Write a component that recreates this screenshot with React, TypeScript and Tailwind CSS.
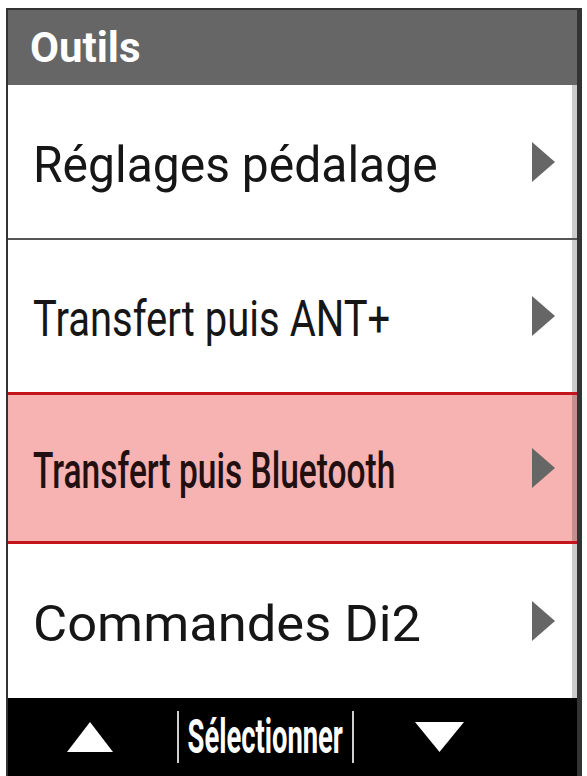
import React from "react";

const Chevron = () => (
  <svg width="23" height="40" viewBox="0 0 23 40" className="shrink-0">
    <polygon points="0,0 23,20 0,40" fill="#666666" />
  </svg>
);

type Row = { label: string; h: string; cls: string; text: string };

export default function App() {
  const rows: Row[] = [
    { label: "Réglages pédalage", h: "h-[155px] border-b-2 border-[#555555]", cls: "bg-white", text: "font-normal scale-x-[0.96]" },
    { label: "Transfert puis ANT+", h: "h-[152px]", cls: "bg-white", text: "font-normal scale-x-[0.8]" },
    { label: "Transfert puis Bluetooth", h: "h-[152px] border-y-[3px] border-[#c3151b]", cls: "bg-[#f7b2b2]", text: "font-medium scale-x-[0.67] text-[#221010]" },
    { label: "Commandes Di2", h: "h-[154px]", cls: "bg-white", text: "font-normal scale-x-[1.05]" },
  ];
  return (
    <div
      className="w-[587px] h-[776px] bg-white pl-[6px] pt-[8px] pr-[5px] overflow-hidden"
      style={{ fontFamily: "Roboto, 'Noto Sans', sans-serif" }}
    >
      <div className="flex h-full flex-col border-l-2 border-t-2 border-r-[5px] border-[#333333]">
        <div className="flex h-[75px] shrink-0 items-center bg-[#666666] pl-[22px]">
          <span className="text-[42px] font-bold leading-none text-white">Outils</span>
        </div>
        {rows.map((r) => (
          <div key={r.label} className={`flex shrink-0 ${r.h} ${r.cls}`}>
            <div className="flex min-w-0 flex-1 items-center pl-[25px] pr-[17px]">
              <div className="min-w-0 flex-1">
                <span className={`mt-[6px] inline-block origin-left whitespace-nowrap text-[50px] leading-none text-[#161616] ${r.text}`}>
                  {r.label}
                </span>
              </div>
              <Chevron />
            </div>
            <div className="w-[5px] shrink-0 bg-black/20" />
          </div>
        ))}
        <div className="flex flex-1 items-center bg-black text-white">
          <div className="flex w-[169px] justify-center pr-[6px]">
            <svg width="46" height="30" viewBox="0 0 46 30">
              <polygon points="23,0 46,30 0,30" fill="#ffffff" />
            </svg>
          </div>
          <div className="h-[52px] w-[2px] bg-[#cfcfcf]" />
          <div className="flex w-[173px] justify-center overflow-visible">
            <span className="inline-block whitespace-nowrap scale-x-[0.57] text-[48px] font-bold leading-none">
              Sélectionner
            </span>
          </div>
          <div className="h-[52px] w-[2px] bg-[#cfcfcf]" />
          <div className="flex flex-1 justify-start pl-[61px]">
            <svg width="49" height="30" viewBox="0 0 49 30">
              <polygon points="0,0 49,0 24.5,30" fill="#ffffff" />
            </svg>
          </div>
        </div>
      </div>
    </div>
  );
}
